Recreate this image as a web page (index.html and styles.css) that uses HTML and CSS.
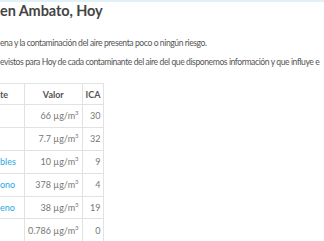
FILE: index.html
```html
<!DOCTYPE html>
<html lang="es">
<head>
<meta charset="utf-8">
<title>Calidad del aire en Ambato</title>
<link rel="stylesheet" href="styles.css">
</head>
<body>
<div class="top-rule"></div>
<main class="report">
  <h2 class="report-title">en Ambato, Hoy</h2>
  <p class="report-text">ena y la contaminación del aire presenta poco o ningún riesgo.</p>
  <p class="report-text">evistos para Hoy de cada contaminante del aire del que disponemos información y que influye e</p>
  <table class="pollutants">
    <thead>
      <tr><th class="c-name">te</th><th class="c-val">Valor</th><th class="c-ica">ICA</th></tr>
    </thead>
    <tbody>
      <tr><td class="c-name"></td><td class="c-val">66 µg/m<sup>3</sup></td><td class="c-ica">30</td></tr>
      <tr><td class="c-name"></td><td class="c-val">7.7 µg/m<sup>3</sup></td><td class="c-ica">32</td></tr>
      <tr><td class="c-name"><a href="#">bles</a></td><td class="c-val">10 µg/m<sup>3</sup></td><td class="c-ica">9</td></tr>
      <tr><td class="c-name"><a href="#">ono</a></td><td class="c-val">378 µg/m<sup>3</sup></td><td class="c-ica">4</td></tr>
      <tr><td class="c-name"><a href="#">eno</a></td><td class="c-val">38 µg/m<sup>3</sup></td><td class="c-ica">19</td></tr>
      <tr><td class="c-name"></td><td class="c-val">0.786 µg/m<sup>3</sup></td><td class="c-ica">0</td></tr>
    </tbody>
  </table>
</main>
</body>
</html>
```

FILE: styles.css
```css
html, body {
  margin: 0;
  padding: 0;
  background: #fff;
  overflow: hidden;
}

body {
  font-family: Lato, "Open Sans", sans-serif;
  color: #555;
}

.top-rule {
  height: 2px;
  background: #e2f0f7;
}

.report {
  padding: 0;
}

.report-title {
  margin: 0;
  font-size: 14.5px;
  line-height: 18px;
  font-weight: 700;
  color: #444;
  letter-spacing: -0.1px;
}

.report-text {
  margin: 17px 0 0;
  font-size: 8.6px;
  line-height: 12px;
  color: #555;
  letter-spacing: -0.42px;
  white-space: nowrap;
}

.report-text + .report-text {
  margin-top: 7px;
}

.pollutants {
  margin-top: 15px;
  border-collapse: collapse;
  font-size: 9px;
  color: #777;
}

.pollutants th,
.pollutants td {
  border: 1px solid #e2e2e2;
  border-left: none;
  height: 21.9px;
  padding: 0 3px;
  white-space: nowrap;
}

.pollutants th {
  height: 20px;
  font-weight: 700;
  color: #555;
  text-align: left;
}

.pollutants .c-name {
  width: 21px;
  padding-left: 0;
}

.pollutants .c-val {
  width: 46px;
  text-align: right;
}

.pollutants th.c-val {
  text-align: center;
}

.pollutants .c-ica {
  width: 11px;
  text-align: right;
}

.pollutants a {
  color: #2aa7e0;
  text-decoration: none;
}

.pollutants sup {
  font-size: 6px;
  line-height: 0;
  vertical-align: 4px;
}
```
